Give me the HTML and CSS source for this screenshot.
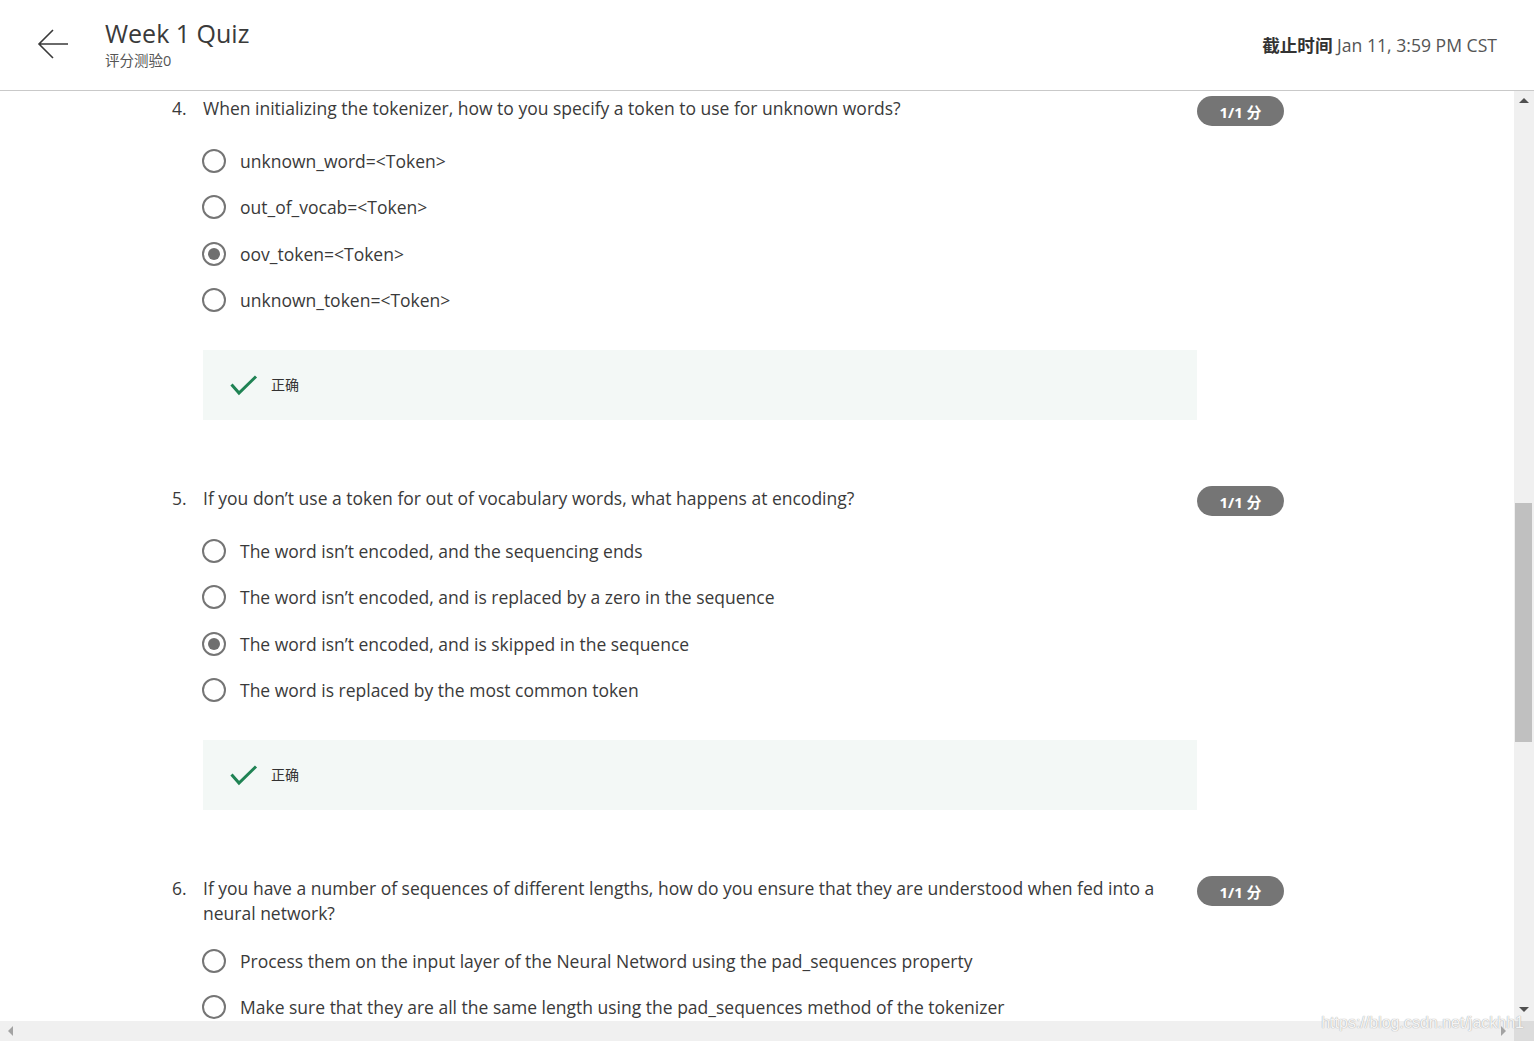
FILE: index.html
```html
<!DOCTYPE html>
<html lang="zh">
<head>
<meta charset="utf-8">
<title>Week 1 Quiz</title>
<link rel="stylesheet" href="styles.css">
</head>
<body>
<div class="app">
  <header class="topbar">
    <div class="left">
      <svg class="back" width="32" height="32" viewBox="0 0 32 32"><path d="M31 15 H2 M16 1 L2 15 L16 29" fill="none" stroke="#3a3a3a" stroke-width="1.6"/></svg>
      <div class="titles">
        <div class="title">Week 1 Quiz</div>
        <div class="subtitle">评分测验0</div>
      </div>
    </div>
    <div class="due"><b>截止时间</b> Jan 11, 3:59 PM CST</div>
  </header>
  <div class="viewport">
    <main class="content">
      <section class="question">
        <div class="num">4.</div>
        <div class="body">
          <div class="qtext">When initializing the tokenizer, how to you specify a token to use for unknown words?</div>
          <div class="options">
            <div class="opt"><span class="radio"></span><span>unknown_word=&lt;Token&gt;</span></div>
            <div class="opt"><span class="radio"></span><span>out_of_vocab=&lt;Token&gt;</span></div>
            <div class="opt"><span class="radio on"></span><span>oov_token=&lt;Token&gt;</span></div>
            <div class="opt"><span class="radio"></span><span>unknown_token=&lt;Token&gt;</span></div>
          </div>
          <div class="feedback">
            <svg width="28" height="22" viewBox="0 0 28 22"><path d="M1.5 9.5 L9 18 L26 1.5" fill="none" stroke="#1f8354" stroke-width="3"/></svg>
            <span>正确</span>
          </div>
        </div>
        <div class="badge">1/1 分</div>
      </section>
      <section class="question">
        <div class="num">5.</div>
        <div class="body">
          <div class="qtext">If you don’t use a token for out of vocabulary words, what happens at encoding?</div>
          <div class="options">
            <div class="opt"><span class="radio"></span><span>The word isn’t encoded, and the sequencing ends</span></div>
            <div class="opt"><span class="radio"></span><span>The word isn’t encoded, and is replaced by a zero in the sequence</span></div>
            <div class="opt"><span class="radio on"></span><span>The word isn’t encoded, and is skipped in the sequence</span></div>
            <div class="opt"><span class="radio"></span><span>The word is replaced by the most common token</span></div>
          </div>
          <div class="feedback">
            <svg width="28" height="22" viewBox="0 0 28 22"><path d="M1.5 9.5 L9 18 L26 1.5" fill="none" stroke="#1f8354" stroke-width="3"/></svg>
            <span>正确</span>
          </div>
        </div>
        <div class="badge">1/1 分</div>
      </section>
      <section class="question">
        <div class="num">6.</div>
        <div class="body">
          <div class="qtext">If you have a number of sequences of different lengths, how do you ensure that they are understood when fed into a neural network?</div>
          <div class="options">
            <div class="opt"><span class="radio"></span><span>Process them on the input layer of the Neural Netword using the pad_sequences property</span></div>
            <div class="opt"><span class="radio"></span><span>Make sure that they are all the same length using the pad_sequences method of the tokenizer</span></div>
          </div>
        </div>
        <div class="badge">1/1 分</div>
      </section>
    </main>
    <div class="vscroll">
      <span class="arrow up"></span>
      <div class="vtrack"><div class="vthumb"></div></div>
      <span class="arrow down"></span>
    </div>
  </div>
  <div class="hscroll">
    <div class="htrack">
      <span class="arrow left"></span>
      <span class="arrow right"></span>
    </div>
    <div class="corner"></div>
  </div>
  <div class="watermark">https://blog.csdn.net/jackhh1</div>
</div>
</body>
</html>
```

FILE: styles.css
```css
* { box-sizing: border-box; }
html, body { margin: 0; padding: 0; height: 100%; overflow: hidden; background: #fff; }
body { font-family: "Open Sans", "Noto Sans CJK SC", sans-serif; color: #373737; }
.app { position: relative; height: 100vh; display: flex; flex-direction: column; }

.topbar {
  height: 91px; flex: none;
  border-bottom: 1px solid #c9c9c9;
  display: flex; align-items: center; justify-content: space-between;
  padding: 0 37px 0 37px;
}
.left { display: flex; align-items: center; }
.back { display: block; margin-right: 36px; }
.titles { display: flex; flex-direction: column; margin-top: -2px; }
.title { font-size: 25px; line-height: 30px; color: #3a3a3a; }
.subtitle { font-size: 14.5px; line-height: 20px; color: #555; margin-top: 3px; }
.due { font-size: 17.6px; color: #555; line-height: 24px; }
.due b { color: #333; font-weight: 700; }

.viewport { flex: 1; display: flex; min-height: 0; }
.content { flex: 1; overflow: hidden; padding: 5px 0 0 172px; }

.question {
  display: grid;
  grid-template-columns: 31px 994px 87px;
  align-items: start;
  margin-bottom: 66px;
}
.num { font-size: 17.5px; line-height: 25px; color: #3a3a3a; }
.qtext { font-size: 17.5px; line-height: 25px; color: #3a3a3a; padding-right: 20px; min-height: 30px; }
.options { margin-top: 12px; }
.opt { height: 46.33px; display: flex; align-items: center; font-size: 17.5px; color: #3a3a3a; }
.radio {
  flex: none; width: 24px; height: 24px; margin-left: -1px; margin-right: 14px;
  border: 2px solid #757575; border-radius: 50%;
  display: flex; align-items: center; justify-content: center;
}
.radio.on::after { content: ""; width: 12px; height: 12px; border-radius: 50%; background: #6f6f6f; }

.feedback {
  margin-top: 26.7px; height: 70px;
  background: #f3f8f6;
  display: flex; align-items: center;
  padding-left: 27px;
}
.feedback svg { display: block; margin-right: 13px; margin-top: 2px; }
.feedback span { font-size: 14px; color: #333; margin-top: -2px; }

.badge {
  width: 87px; height: 30px; border-radius: 15px;
  background: #757575; color: #fff;
  font-size: 15px; font-weight: 700;
  display: flex; align-items: center; justify-content: center;
}

.vscroll { width: 20px; flex: none; background: #f0f0f0; display: flex; flex-direction: column; align-items: center; }
.vtrack { flex: 1; width: 100%; position: relative; }
.vthumb { position: absolute; left: 1px; right: 2px; top: 394px; height: 239px; background: #c0c0c0; }
.arrow { width: 0; height: 0; flex: none; display: block; }
.arrow.up { margin: 7px 0 6px; border-left: 5px solid transparent; border-right: 5px solid transparent; border-bottom: 5px solid #505050; }
.arrow.down { margin: 6px 0 9px; border-left: 5px solid transparent; border-right: 5px solid transparent; border-top: 5px solid #505050; }

.hscroll { height: 20px; flex: none; display: flex; }
.htrack { flex: 1; background: #f0f0f0; display: flex; align-items: center; justify-content: space-between; padding: 0 8px; }
.arrow.left { border-top: 5px solid transparent; border-bottom: 5px solid transparent; border-right: 5px solid #a3a3a3; }
.arrow.right { border-top: 5px solid transparent; border-bottom: 5px solid transparent; border-left: 5px solid #a3a3a3; }
.corner { width: 20px; background: #dcdcdc; }

.watermark {
  position: absolute; right: 10px; bottom: 9px;
  font-family: "Liberation Sans", sans-serif; font-size: 16px;
  color: rgba(255,255,255,0.9);
  text-shadow: 0 0 1px #aaa, 0 0 1px #bbb;
}
```
